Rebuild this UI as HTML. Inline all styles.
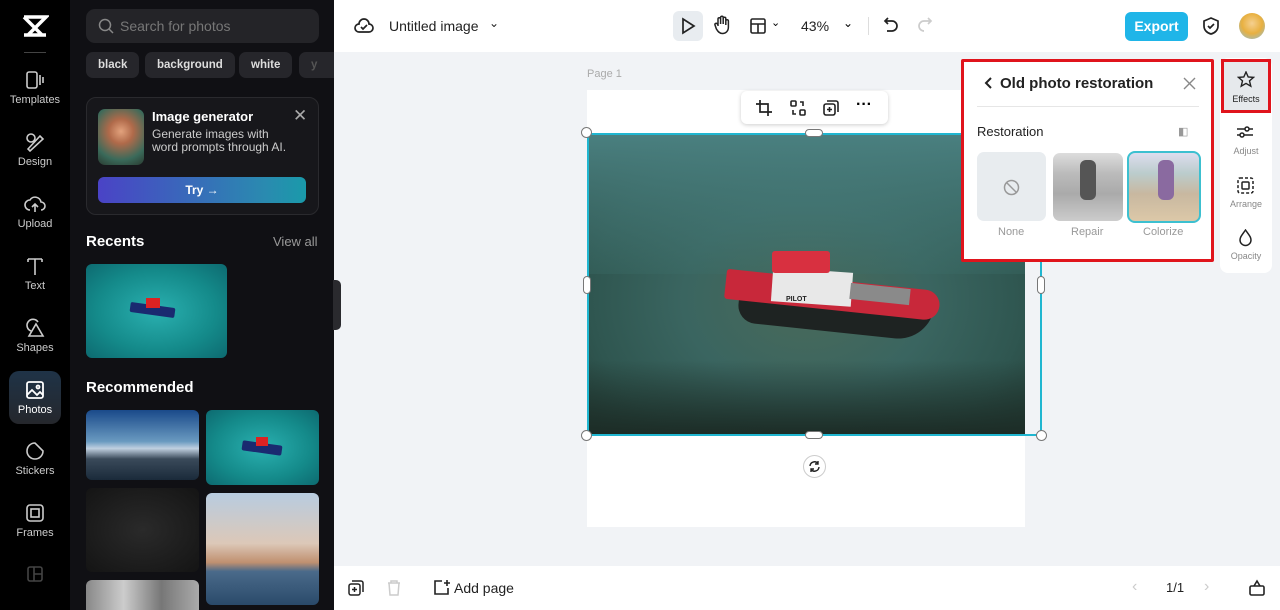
<!DOCTYPE html>
<html><head><meta charset="utf-8"><style>
*{box-sizing:border-box;margin:0;padding:0}
body{width:1280px;height:610px;overflow:hidden;font-family:"Liberation Sans",sans-serif;background:#f1f3f6;position:relative}
.abs{position:absolute}
.rail{left:0;top:0;width:70px;height:610px;background:#000}
.ri{position:absolute;left:0;width:70px;text-align:center;color:#ccc;font-size:11px}
.ri svg{display:block;margin:0 auto 4px}
.panel{left:70px;top:0;width:264px;height:610px;background:#101014}
.chip{position:absolute;top:52px;height:26px;border-radius:7px;background:#26262b;color:#ddd;font-size:11.5px;font-weight:bold;line-height:26px;padding:0 12px}
.top{left:334px;top:0;width:946px;height:52px;background:#fff}
.bot{left:334px;top:566px;width:946px;height:44px;background:#fff}
.h{position:absolute;width:11px;height:11px;border-radius:50%;background:#fff;border:1px solid #777}
</style></head><body>
<div class="abs rail">
 <svg class="abs" style="left:21px;top:14px" width="28" height="24" viewBox="0 0 28 24"><path d="M3 3h22L7 21h18M3 3l18 18H3" fill="none" stroke="#fff" stroke-width="3.5"/></svg>
 <div class="abs" style="left:24px;top:52px;width:22px;height:1px;background:#444"></div>
 <div class="ri" style="top:70px"><svg width="22" height="20" viewBox="0 0 22 20" fill="none" stroke="#ccc" stroke-width="1.6"><rect x="3" y="2" width="10" height="16" rx="2"/><path d="M16 5v10M19 7v6"/></svg>Templates</div>
 <div class="ri" style="top:132px"><svg width="22" height="20" viewBox="0 0 22 20" fill="none" stroke="#ccc" stroke-width="1.6"><circle cx="7" cy="6" r="4"/><path d="M4 17l12-13 3 3-13 12z"/></svg>Design</div>
 <div class="ri" style="top:194px"><svg width="22" height="20" viewBox="0 0 22 20" fill="none" stroke="#ccc" stroke-width="1.6"><path d="M6 16a5 5 0 0 1 0-10 6 6 0 0 1 11 2 4 4 0 0 1 0 8M11 18V10M8 13l3-3 3 3"/></svg>Upload</div>
 <div class="ri" style="top:256px"><svg width="22" height="20" viewBox="0 0 22 20" fill="none" stroke="#ccc" stroke-width="1.6"><path d="M4 3h14M11 3v16M4 3v3M18 3v3"/></svg>Text</div>
 <div class="ri" style="top:318px"><svg width="22" height="20" viewBox="0 0 22 20" fill="none" stroke="#ccc" stroke-width="1.6"><path d="M7 13a6 6 0 1 1 7-9M12 6l7 12H5z"/></svg>Shapes</div>
 <div class="abs" style="left:9px;top:371px;width:52px;height:53px;border-radius:10px;background:linear-gradient(#1f3347,#25272c)"></div>
 <div class="ri" style="top:380px;color:#fff"><svg width="22" height="20" viewBox="0 0 22 20" fill="none" stroke="#fff" stroke-width="1.8"><rect x="3" y="2" width="16" height="16" rx="2"/><path d="M3 15l5-5 5 5 3-3 3 3"/><circle cx="14" cy="7" r="1.5"/></svg>Photos</div>
 <div class="ri" style="top:441px"><svg width="22" height="20" viewBox="0 0 22 20" fill="none" stroke="#ccc" stroke-width="1.6"><path d="M19 10a8 8 0 1 1-8-8l8 8z"/></svg>Stickers</div>
 <div class="ri" style="top:503px"><svg width="22" height="20" viewBox="0 0 22 20" fill="none" stroke="#ccc" stroke-width="1.6"><rect x="3" y="2" width="16" height="16" rx="3"/><rect x="7" y="6" width="8" height="8"/></svg>Frames</div>
 <svg class="abs" style="left:26px;top:566px" width="18" height="16" viewBox="0 0 18 16" fill="none" stroke="#444" stroke-width="1.6"><rect x="2" y="1" width="14" height="14" rx="2"/><path d="M8 1v14M8 8h8"/></svg>
</div>
<div class="abs panel">
 <div class="abs" style="left:16px;top:9px;width:233px;height:34px;border-radius:9px;background:#242428"></div>
 <svg class="abs" style="left:28px;top:18px" width="16" height="16" viewBox="0 0 16 16" fill="none" stroke="#888" stroke-width="1.5"><circle cx="7" cy="7" r="5.5"/><path d="M11 11l4 4"/></svg>
 <div class="abs" style="left:50px;top:18px;color:#777;font-size:14px">Search for photos</div>
 <div class="chip" style="left:16px">black</div>
 <div class="chip" style="left:75px">background</div>
 <div class="chip" style="left:169px">white</div>
 <div class="chip" style="left:229px;width:35px;border-radius:7px 0 0 7px;color:#555">y</div>
 <div class="abs" style="left:16px;top:97px;width:233px;height:118px;border-radius:10px;background:#17171b;border:1px solid #2a2a2e"></div>
 <div class="abs" style="left:28px;top:109px;width:46px;height:56px;border-radius:7px;background:radial-gradient(circle at 50% 40%,#e2a27d 0,#b06a4a 30%,#3a6a5a 70%,#2a3a30 100%)"></div>
 <div class="abs" style="left:82px;top:109px;color:#fff;font-size:13px;font-weight:bold">Image generator</div>
 <div class="abs" style="left:82px;top:128px;color:#ccc;font-size:12px;line-height:13px">Generate images with<br>word prompts through AI.</div>
 <div class="abs" style="left:223px;top:106px;color:#aaa;font-size:17px">✕</div>
 <div class="abs" style="left:28px;top:177px;width:208px;height:26px;border-radius:6px;background:linear-gradient(90deg,#4a43c6,#2a8ab0 80%,#1a9aaa);color:#fff;font-size:12px;font-weight:bold;text-align:center;line-height:26px">Try →</div>
 <div class="abs" style="left:16px;top:233px;color:#fff;font-size:15px;font-weight:bold">Recents</div>
 <div class="abs" style="left:203px;top:234px;color:#999;font-size:13px">View all</div>
 <div class="abs" style="left:16px;top:264px;width:141px;height:94px;border-radius:6px;background:radial-gradient(ellipse at 50% 50%,#2ab0b0,#148a8a 60%,#0d6a70)"></div>
 <div class="abs" style="left:60px;top:305px;width:45px;height:10px;background:#1a2a70;border-radius:2px;transform:rotate(8deg)"></div>
 <div class="abs" style="left:76px;top:298px;width:14px;height:10px;background:#d22"></div>
 <div class="abs" style="left:16px;top:379px;color:#fff;font-size:15px;font-weight:bold">Recommended</div>
 <div class="abs" style="left:16px;top:410px;width:113px;height:70px;border-radius:6px;background:linear-gradient(#1a4a8a,#6a9ac0 45%,#c0d0e0 55%,#3a4a5a 70%,#1a2a3a)"></div>
 <div class="abs" style="left:136px;top:410px;width:113px;height:75px;border-radius:6px;background:radial-gradient(ellipse,#2ab0b0,#148a8a 60%,#0d6a70)"></div>
 <div class="abs" style="left:172px;top:443px;width:40px;height:10px;background:#1a2a70;border-radius:2px;transform:rotate(8deg)"></div>
 <div class="abs" style="left:186px;top:437px;width:12px;height:9px;background:#d22"></div>
 <div class="abs" style="left:16px;top:488px;width:113px;height:84px;border-radius:6px;background:radial-gradient(ellipse,#2a2a2a,#141414)"></div>
 <div class="abs" style="left:136px;top:493px;width:113px;height:112px;border-radius:6px;background:linear-gradient(#b8cce0,#dcc8b8 45%,#c09070 62%,#4a6a8a 70%,#2a4a6a)"></div>
 <div class="abs" style="left:16px;top:580px;width:113px;height:30px;border-radius:6px 6px 0 0;background:linear-gradient(90deg,#888,#ccc,#777,#aaa)"></div>
</div>
<div class="abs" style="left:333px;top:280px;width:8px;height:50px;background:#2a2a2e;border-radius:0 5px 5px 0"></div>
<div class="abs top">
 <svg class="abs" style="left:20px;top:16px" width="20" height="20" viewBox="0 0 20 20" fill="none" stroke="#222" stroke-width="1.7"><path d="M5 16a4 4 0 0 1 0-8 5 5 0 0 1 10 0 4 4 0 0 1 0 8z"/><path d="M7 11l2 2 4-4"/></svg>
 <div class="abs" style="left:55px;top:18px;font-size:14px;color:#222">Untitled image</div>
 <div class="abs" style="left:155px;top:16px;font-size:12px;color:#222">⌄</div>
 <div class="abs" style="left:339px;top:11px;width:30px;height:30px;border-radius:6px;background:#e8ecf0"></div>
 <svg class="abs" style="left:346px;top:17px" width="16" height="18" viewBox="0 0 16 18" fill="none" stroke="#222" stroke-width="1.7"><path d="M3 2l11 7-11 7z"/></svg>
 <svg class="abs" style="left:379px;top:15px" width="18" height="20" viewBox="0 0 18 20" fill="none" stroke="#222" stroke-width="1.5"><path d="M5 11V4a1.3 1.3 0 0 1 2.6 0v5V2.5a1.3 1.3 0 0 1 2.6 0V9V3.5a1.3 1.3 0 0 1 2.6 0V10V6a1.3 1.3 0 0 1 2.6 0v6c0 4-2.5 6.5-6 6.5-3 0-4.5-2-6-4.5L2 10a1.3 1.3 0 0 1 2.2-1.3L5 10"/></svg>
 <svg class="abs" style="left:415px;top:17px" width="18" height="18" viewBox="0 0 18 18" fill="none" stroke="#222" stroke-width="1.6"><rect x="2" y="2" width="14" height="14" rx="1.5"/><path d="M2 7h14M9 7v9"/></svg>
 <div class="abs" style="left:437px;top:16px;font-size:11px">⌄</div>
 <div class="abs" style="left:467px;top:18px;font-size:14px;color:#222">43%</div>
 <div class="abs" style="left:509px;top:16px;font-size:12px">⌄</div>
 <div class="abs" style="left:534px;top:17px;width:1px;height:18px;background:#ddd"></div>
 <svg class="abs" style="left:548px;top:16px" width="18" height="18" viewBox="0 0 18 18" fill="none" stroke="#222" stroke-width="1.7"><path d="M6 2L3 5l3 3M3 5h7a5 5 0 0 1 0 10H5"/></svg>
 <svg class="abs" style="left:582px;top:16px" width="18" height="18" viewBox="0 0 18 18" fill="none" stroke="#ccc" stroke-width="1.7"><path d="M12 2l3 3-3 3M15 5H8a5 5 0 0 0 0 10"/></svg>
 <div class="abs" style="left:791px;top:12px;width:63px;height:29px;border-radius:6px;background:#1fb5e8;color:#fff;font-weight:bold;font-size:14px;text-align:center;line-height:29px">Export</div>
 <svg class="abs" style="left:868px;top:16px" width="18" height="20" viewBox="0 0 18 20" fill="none" stroke="#222" stroke-width="1.7"><path d="M9 2l7 3v5c0 4-3 7-7 8-4-1-7-4-7-8V5z"/><path d="M6 10l2 2 4-4"/></svg>
 <div class="abs" style="left:905px;top:13px;width:26px;height:26px;border-radius:50%;background:radial-gradient(circle at 50% 40%,#f5d090,#e8b040 50%,#8ac0e0)"></div>
</div>
<div class="abs" style="left:587px;top:68px;font-size:11px;color:#aaa">Page 1</div>
<div class="abs" style="left:587px;top:90px;width:438px;height:437px;background:#fff"></div>
<div class="abs" style="left:588px;top:134px;width:437px;height:301px;background:radial-gradient(ellipse at 50% 55%,#4a6a5a 0,#3a6560 40%,#2f5650 70%,#223a33 100%)"></div>
<div class="abs" style="left:588px;top:134px;width:437px;height:140px;background:linear-gradient(#4a8080 ,rgba(60,110,105,0.3))"></div>
<div class="abs" style="left:588px;top:360px;width:437px;height:75px;background:linear-gradient(rgba(20,35,30,0),#1c2c26)"></div>
<div class="abs" style="left:738px;top:296px;width:195px;height:36px;background:#1e2322;border-radius:0 0 40px 20px;transform:rotate(6deg)"></div>
<div class="abs" style="left:725px;top:280px;width:215px;height:30px;background:#c8283a;border-radius:6px 30px 30px 6px;transform:rotate(6deg)"></div>
<div class="abs" style="left:772px;top:270px;width:80px;height:34px;background:#e8e8e8;transform:rotate(4deg)"></div>
<div class="abs" style="left:772px;top:251px;width:58px;height:22px;background:#d83040;border-radius:3px"></div>
<div class="abs" style="left:850px;top:286px;width:60px;height:16px;background:#8a8a8a;transform:rotate(6deg)"></div>
<div class="abs" style="left:786px;top:296px;font-size:7px;font-weight:bold;color:#222">PILOT</div>
<div class="abs" style="left:587px;top:133px;width:455px;height:303px;border:2px solid #20b6d0"></div>
<div class="h" style="left:581px;top:127px"></div><div class="h" style="left:1036px;top:127px"></div>
<div class="h" style="left:581px;top:430px"></div><div class="h" style="left:1036px;top:430px"></div>
<div class="abs" style="left:805px;top:129px;width:18px;height:8px;border-radius:4px;background:#fff;border:1px solid #777"></div>
<div class="abs" style="left:805px;top:431px;width:18px;height:8px;border-radius:4px;background:#fff;border:1px solid #777"></div>
<div class="abs" style="left:583px;top:276px;width:8px;height:18px;border-radius:4px;background:#fff;border:1px solid #777"></div>
<div class="abs" style="left:1037px;top:276px;width:8px;height:18px;border-radius:4px;background:#fff;border:1px solid #777"></div>
<div class="abs" style="left:803px;top:455px;width:23px;height:23px;border-radius:50%;background:#fff;border:1px solid #ccc"></div>
<svg class="abs" style="left:808px;top:460px" width="13" height="13" viewBox="0 0 13 13" fill="none" stroke="#222" stroke-width="1.4"><path d="M2 6a4.5 4.5 0 0 1 8-2.5M11 7a4.5 4.5 0 0 1-8 2.5M10 1v3H7M3 12V9h3"/></svg>
<div class="abs" style="left:741px;top:91px;width:147px;height:33px;background:#fff;border-radius:6px;box-shadow:0 1px 4px rgba(0,0,0,.2)"></div>
<svg class="abs" style="left:755px;top:99px" width="18" height="18" viewBox="0 0 18 18" fill="none" stroke="#222" stroke-width="1.7"><path d="M5 1v12h12M1 5h12v12"/></svg>
<svg class="abs" style="left:789px;top:99px" width="18" height="18" viewBox="0 0 18 18" fill="none" stroke="#222" stroke-width="1.6"><rect x="2" y="2" width="5" height="5" rx="1"/><rect x="11" y="11" width="5" height="5" rx="1"/><path d="M11 3h3v4M7 15H4v-4"/></svg>
<svg class="abs" style="left:822px;top:99px" width="18" height="18" viewBox="0 0 18 18" fill="none" stroke="#222" stroke-width="1.6"><rect x="2" y="5" width="11" height="11" rx="2"/><path d="M5 2h9a2 2 0 0 1 2 2v9M7.5 8v5M5 10.5h5"/></svg>
<div class="abs" style="left:856px;top:96px;font-size:16px;font-weight:bold">···</div>
<div class="abs" style="left:961px;top:59px;width:253px;height:203px;background:#fff;border:3px solid #e0141c;border-radius:2px"></div>
<svg class="abs" style="left:983px;top:76px" width="10" height="14" viewBox="0 0 10 14" fill="none" stroke="#222" stroke-width="2"><path d="M8 2L3 7l5 5"/></svg>
<div class="abs" style="left:1000px;top:75px;font-size:15px;font-weight:bold;color:#222">Old photo restoration</div>
<svg class="abs" style="left:1183px;top:77px" width="13" height="13" viewBox="0 0 13 13" fill="none" stroke="#888" stroke-width="1.4"><path d="M1 1l11 11M12 1L1 12"/></svg>
<div class="abs" style="left:977px;top:106px;width:222px;height:1px;background:#e6e6e6"></div>
<div class="abs" style="left:977px;top:124px;font-size:13px;color:#222">Restoration</div>
<div class="abs" style="left:1178px;top:125px;font-size:11px;color:#999">◧</div>
<div class="abs" style="left:977px;top:152px;width:69px;height:69px;border-radius:7px;background:#e8ecef"></div>
<svg class="abs" style="left:1003px;top:179px" width="17" height="17" viewBox="0 0 17 17" fill="none" stroke="#999" stroke-width="1.5"><circle cx="8.5" cy="8.5" r="7"/><path d="M3.5 3.5l10 10"/></svg>
<div class="abs" style="left:1053px;top:153px;width:70px;height:68px;border-radius:7px;background:linear-gradient(#ddd,#bbb 30%,#aaa 60%,#ccc)"></div>
<div class="abs" style="left:1127px;top:151px;width:74px;height:72px;border-radius:8px;border:2px solid #3cc0d0;background:linear-gradient(#dde,#bcc 30%,#c8b8a0 60%,#dcc8a8)"></div>
<div class="abs" style="left:1080px;top:160px;width:16px;height:40px;background:#555;border-radius:6px"></div>
<div class="abs" style="left:1158px;top:160px;width:16px;height:40px;background:#8a6aa0;border-radius:6px"></div>
<div class="abs" style="left:998px;top:226px;font-size:11px;color:#999">None</div>
<div class="abs" style="left:1071px;top:226px;font-size:11px;color:#999">Repair</div>
<div class="abs" style="left:1143px;top:226px;font-size:11px;color:#999">Colorize</div>
<div class="abs" style="left:1220px;top:58px;width:52px;height:215px;background:#fff;border-radius:8px"></div>
<div class="abs" style="left:1221px;top:59px;width:50px;height:54px;background:#e6e9ec;border:3px solid #e0141c"></div>
<svg class="abs" style="left:1237px;top:71px" width="18" height="18" viewBox="0 0 18 18" fill="none" stroke="#222" stroke-width="1.4"><path d="M9 1l2.2 5 5.3.4-4 3.5 1.3 5.3L9 12.4 4.2 15.2l1.3-5.3-4-3.5 5.3-.4z"/></svg>
<div class="abs" style="left:1220px;top:94px;width:52px;text-align:center;font-size:9px;color:#222">Effects</div>
<svg class="abs" style="left:1236px;top:124px" width="18" height="16" viewBox="0 0 18 16" fill="none" stroke="#222" stroke-width="1.5"><path d="M1 5h16M1 11h16"/><circle cx="11" cy="5" r="2" fill="#fff"/><circle cx="6" cy="11" r="2" fill="#fff"/></svg>
<div class="abs" style="left:1220px;top:146px;width:52px;text-align:center;font-size:9px;color:#888">Adjust</div>
<svg class="abs" style="left:1237px;top:177px" width="17" height="17" viewBox="0 0 17 17" fill="none" stroke="#222" stroke-width="1.5"><rect x="1" y="1" width="15" height="15" rx="2" stroke-dasharray="3 2"/><rect x="5" y="5" width="7" height="7" rx="1"/></svg>
<div class="abs" style="left:1220px;top:199px;width:52px;text-align:center;font-size:9px;color:#888">Arrange</div>
<svg class="abs" style="left:1238px;top:229px" width="15" height="18" viewBox="0 0 15 18" fill="none" stroke="#222" stroke-width="1.5"><path d="M7.5 1C4 6 2 8 2 11a5.5 5.5 0 0 0 11 0c0-3-2-5-5.5-10z"/></svg>
<div class="abs" style="left:1220px;top:251px;width:52px;text-align:center;font-size:9px;color:#888">Opacity</div>
<div class="abs bot">
 <svg class="abs" style="left:14px;top:14px" width="16" height="16" viewBox="0 0 16 16" fill="none" stroke="#222" stroke-width="1.5"><rect x="1" y="4" width="11" height="11" rx="2"/><path d="M4 1h9a2 2 0 0 1 2 2v9M6.5 7v5M4 9.5h5"/></svg>
 <svg class="abs" style="left:53px;top:14px" width="14" height="16" viewBox="0 0 14 16" fill="none" stroke="#ccc" stroke-width="1.5"><path d="M1 3h12M4 3V1h6v2M2 3l1 12h8l1-12"/></svg>
 <svg class="abs" style="left:99px;top:13px" width="18" height="18" viewBox="0 0 18 18" fill="none" stroke="#222" stroke-width="1.6"><path d="M15 9v6H2V2h7M11 4h6M14 1v6"/></svg>
 <div class="abs" style="left:120px;top:14px;font-size:14px;color:#222">Add page</div>
 <div class="abs" style="left:798px;top:12px;font-size:16px;color:#ccc">‹</div>
 <div class="abs" style="left:832px;top:14px;font-size:13px;color:#222">1/1</div>
 <div class="abs" style="left:870px;top:12px;font-size:16px;color:#ccc">›</div>
 <svg class="abs" style="left:914px;top:13px" width="18" height="18" viewBox="0 0 18 18" fill="none" stroke="#222" stroke-width="1.6"><rect x="2" y="7" width="14" height="9" rx="1.5"/><path d="M6 7l3-5 3 5"/></svg>
</div>
</body></html>
